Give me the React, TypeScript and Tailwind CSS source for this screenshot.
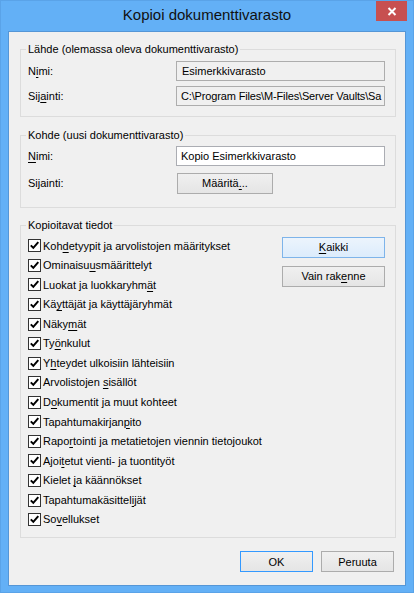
import React from 'react';

const items: [string, string, string][] = [
  ['Koh', 'd', 'etyypit ja arvolistojen määritykset'],
  ['Ominaisu', 'u', 'smäärittelyt'],
  ['Luokat ja luokkaryhm', 'ä', 't'],
  ['Kä', 'y', 'ttäjät ja käyttäjäryhmät'],
  ['Näky', 'm', 'ät'],
  ['Ty', 'ö', 'nkulut'],
  ['Y', 'h', 'teydet ulkoisiin lähteisiin'],
  ['Arvolistojen ', 's', 'isällöt'],
  ['D', 'o', 'kumentit ja muut kohteet'],
  ['Tapahtumakirjan', 'p', 'ito'],
  ['Rapo', 'r', 'tointi ja metatietojen viennin tietojoukot'],
  ['Ajoi', 't', 'etut vienti- ja tuontityöt'],
  ['Kielet ', 'j', 'a käännökset'],
  ['Tapahtumakäsittel', 'i', 'jät'],
  ['So', 'v', 'ellukset'],
];

// mnemonic underline like the win32 accelerator keys
function Mn({ children }: { children: React.ReactNode }) {
  return <span className="underline decoration-1 underline-offset-[2px]">{children}</span>;
}

function Button({ children, w, variant = 'normal' }: { children: React.ReactNode; w: string; variant?: 'normal' | 'hot' | 'default' }) {
  const look =
    variant === 'hot'
      ? 'border-[#7eb4ea] bg-gradient-to-b from-[#ecf4fc] to-[#dcecfc]'
      : variant === 'default'
      ? 'border-[#3399ff] bg-gradient-to-b from-[#f0f0f0] to-[#e5e5e5]'
      : 'border-[#acacac] bg-gradient-to-b from-[#f0f0f0] to-[#e5e5e5]';
  return (
    <div className={`${w} h-[21px] border ${look} flex items-center justify-center text-black`}>
      {children}
    </div>
  );
}

function Checkbox() {
  return (
    <div className="w-[13px] h-[13px] border border-[#333333] bg-white flex items-center justify-center shrink-0">
      <svg width="11" height="11" viewBox="0 0 11 11">
        <path d="M1.8 5.4 L4.3 7.9 L9.3 2.2" fill="none" stroke="#000" strokeWidth="2" />
      </svg>
    </div>
  );
}

function Group({ title, mt, children }: { title: string; mt: string; children: React.ReactNode }) {
  return (
    <fieldset className={`${mt} ml-[11px] mr-[9px] min-w-0 border border-[#dcdcdc] p-0`}>
      <legend className="ml-[5px] px-[2px] leading-[15px] h-[15px]">{title}</legend>
      {children}
    </fieldset>
  );
}

export default function App() {
  return (
    <div className="w-[414px] h-[593px] bg-[#63b0f6] border border-[#5aa3e8] flex flex-col font-['Liberation_Sans',Arial,sans-serif] text-[11px] text-black">
      {/* title bar */}
      <div className="h-[30px] flex items-start shrink-0">
        <div className="w-[37px]" />
        <div className="flex-1 text-center text-[15px] leading-[20px] pt-[4px] text-[#111111]">Kopioi dokumenttivarasto</div>
        <div className="w-[31px] h-[20px] mr-[6px] bg-[#c75050] flex items-center justify-center">
          <svg width="10" height="9" viewBox="0 0 10 9">
            <path d="M1.5 1 L8.5 8 M8.5 1 L1.5 8" stroke="#fff" strokeWidth="2" />
          </svg>
        </div>
      </div>

      {/* client area */}
      <div className="flex-1 mx-[7px] mb-[6px] bg-[#f0f0f0] border border-[#5596d6] flex flex-col">
        <Group title="Lähde (olemassa oleva dokumenttivarasto)" mt="mt-[10px]">
          <div className="pt-[4px] pb-[10px] pl-[7px] pr-[10px] flex flex-col gap-[5px]">
            <div className="flex items-center h-[20px]">
              <div className="w-[148px] shrink-0">N<Mn>i</Mn>mi:</div>
              <div className="flex-1 min-w-0 h-[20px] border border-[#adadad] bg-[#f0f0f0] pl-[5px] flex items-center overflow-hidden whitespace-nowrap">Esimerkkivarasto</div>
            </div>
            <div className="flex items-center h-[20px]">
              <div className="w-[148px] shrink-0">Sij<Mn>a</Mn>inti:</div>
              <div className="flex-1 min-w-0 h-[20px] border border-[#adadad] bg-[#f0f0f0] pl-[4px] flex items-center overflow-hidden whitespace-nowrap tracking-[-0.15px]">C:\Program Files\M-Files\Server Vaults\Sa</div>
            </div>
          </div>
        </Group>

        <Group title="Kohde (uusi dokumenttivarasto)" mt="mt-[11px]">
          <div className="pt-[3px] pb-[13px] pl-[7px] pr-[10px] flex flex-col gap-[7px]">
            <div className="flex items-center h-[20px]">
              <div className="w-[148px] shrink-0"><Mn>N</Mn>imi:</div>
              <div className="flex-1 min-w-0 h-[20px] border border-[#abadb3] bg-white pl-[4px] flex items-center overflow-hidden whitespace-nowrap">Kopio Esimerkkivarasto</div>
            </div>
            <div className="flex items-center h-[21px]">
              <div className="w-[149px] shrink-0">Sijainti:</div>
              <Button w="w-[96px]">Määritä<Mn>.</Mn>..</Button>
            </div>
          </div>
        </Group>

        <Group title="Kopioitavat tiedot" mt="mt-[10px]">
          <div className="pt-[3px] pb-[8px] pl-[7px] pr-[10px] flex">
            <div className="flex-1 flex flex-col">
              {items.map(([a, m, b]) => (
                <div key={a + m + b} className="h-[19.57px] flex items-center gap-[2px]">
                  <Checkbox />
                  <div className="whitespace-nowrap">
                    {a}
                    <Mn>{m}</Mn>
                    {b}
                  </div>
                </div>
              ))}
            </div>
            <div className="flex flex-col gap-[8px] pt-[1px]">
              <Button w="w-[103px]" variant="hot"><Mn>K</Mn>aikki</Button>
              <Button w="w-[103px]">Vain rak<Mn>e</Mn>nne</Button>
            </div>
          </div>
        </Group>

        <div className="mt-[13px] pr-[11px] flex justify-end gap-[8px]">
          <Button w="w-[73px]" variant="default">OK</Button>
          <Button w="w-[73px]">Peruuta</Button>
        </div>
      </div>
    </div>
  );
}
